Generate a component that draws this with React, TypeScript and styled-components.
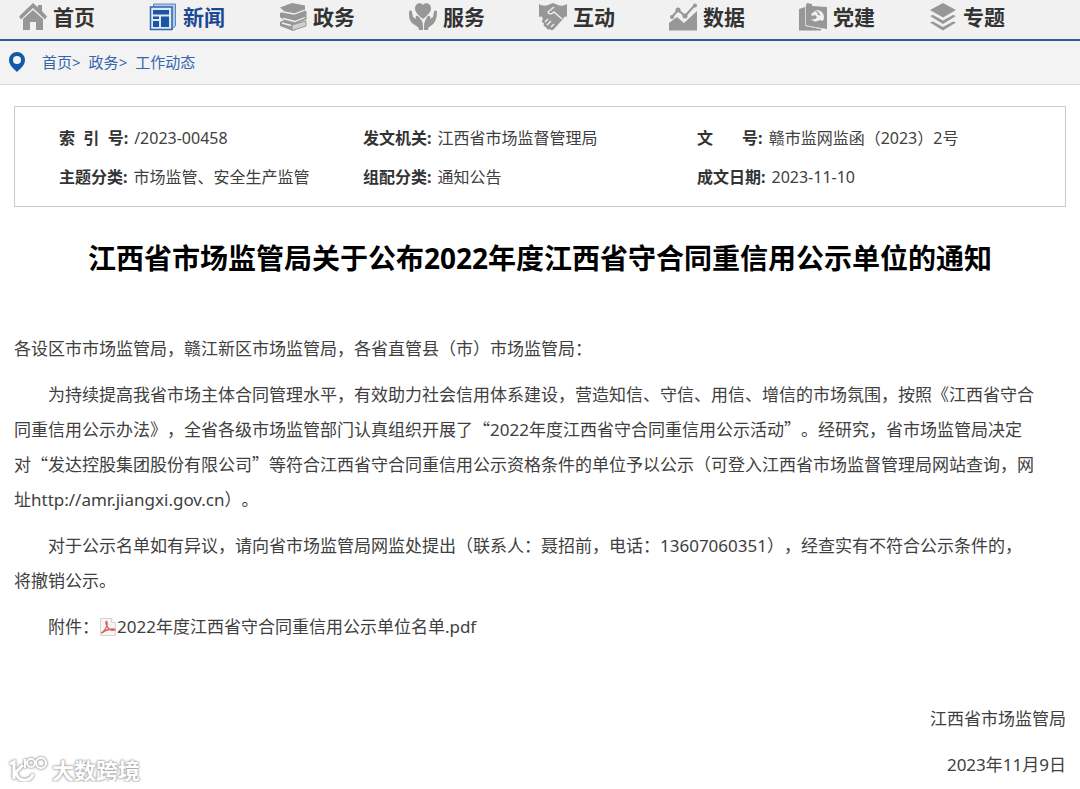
import React from 'react';
import styled, { createGlobalStyle } from 'styled-components';

const GlobalStyle = createGlobalStyle`
  * { box-sizing: border-box; }
  body {
    margin: 0;
    background: #fff;
    color: #404040;
    font-family: "Noto Sans", "Noto Sans CJK SC", sans-serif;
    text-spacing-trim: space-all;
  }
  a { color: inherit; text-decoration: none; }
`;

const Nav = styled.nav`
  display: grid;
  grid-template-columns: repeat(8, 1fr);
  height: 41px;
  padding: 0 21px 5px 19px;
  background: #f1f1f1;
  border-bottom: 2px solid #2d5c9c;
`;

const NavLink = styled.a<{ $active?: boolean }>`
  display: flex;
  align-items: center;
  gap: 6px;
  color: ${p => (p.$active ? '#1b4a94' : '#333')};
  font-size: 21px;
  line-height: 34px;
  font-weight: 700;
  white-space: nowrap;
`;

const NavIcon = styled.svg<{ $active?: boolean }>`
  flex: none;
  width: 28px;
  height: 28px;
  color: ${p => (p.$active ? '#1b56a6' : '#979797')};
`;

const Crumbs = styled.nav`
  display: flex;
  align-items: center;
  height: 44px;
  padding: 0 8px 2px;
  background: #f3f3f3;
  border-bottom: 1px solid #dcdcdc;
  color: #3465ae;
  font-size: 15px;
  line-height: 22px;
`;

const Pin = styled.svg`
  width: 18px;
  height: 22px;
  margin-right: 16px;
`;

const Crumb = styled.span`
  margin-right: 8px;
`;

const Main = styled.main`
  position: relative;
  padding: 21px 14px 0;
`;

const Info = styled.dl`
  display: grid;
  grid-template-columns: 304fr 334fr 368fr;
  row-gap: 15px;
  margin: 0;
  padding: 19px 0 17px 44px;
  border: 1px solid #ccc;
  font-size: 16px;
  line-height: 24px;
`;

const InfoItem = styled.div`
  display: flex;
  gap: 6px;
  white-space: nowrap;
`;

const Label = styled.dt`
  font-weight: 700;
  color: #333;
`;

const Value = styled.dd`
  margin: 0;
`;

const Title = styled.h1`
  margin: 31px 0 53px;
  color: #000;
  font-size: 28px;
  line-height: 40px;
  font-weight: 700;
  text-align: center;
`;

const Paragraph = styled.p<{ $indent?: boolean }>`
  max-width: 60em;
  margin: 0 0 11px;
  font-size: 17px;
  line-height: 35px;
  text-indent: ${p => (p.$indent ? '2em' : '0')};
`;

const Quoted = styled.span`
  font-family: "Noto Sans CJK SC", sans-serif;
  line-height: 1;
`;

const PdfIcon = styled.svg`
  width: 18px;
  height: 18px;
  vertical-align: -3px;
`;

const Signature = styled.footer`
  margin-top: 57px;
  font-size: 17px;
  line-height: 35px;
  text-align: right;
`;

const SignLine = styled.p`
  margin: 0 0 11px;

  &:last-child { margin: 0; }
`;

const Watermark = styled.div`
  position: absolute;
  left: 8px;
  bottom: -4px;
  display: flex;
  align-items: center;
  gap: 4px;
  color: #fff;
  font-size: 22px;
  line-height: 32px;
  font-weight: 700;
  text-shadow: 0 0 2px #999, 0 0 2px #aaa, 0 0 3px #bbb;
`;

const WatermarkLogo = styled.svg`
  width: 40px;
  height: 30px;
  filter: drop-shadow(0 0 1px #999) drop-shadow(0 0 1px #bbb);
`;

const icons: Record<string, React.ReactNode> = {
  首页: (
    <g fill="currentColor">
      <path d="M14 0 19 4.500V2h4v6l5 5.500-2 3L14 5 2 16.500l-2-3Z" />
      <path d="M4 16 14 7l10 9v11h-7v-8h-6v8H4Z" />
    </g>
  ),
  新闻: (
    <g>
      <path d="M4.500 4V1h22v22l-3.500 3" fill="#b4c9e4" stroke="#5d87c0" />
      <path d="M1.500 4h21.500v22.500H1.500Z" fill="#dfe8f3" stroke="#2f66b0" strokeWidth="1.500" />
      <path d="M4 7h16v4.500H4ZM4 13.500h6v2.500H4ZM4 18h6v6H4Zm8-4.500h8V24h-8Z" fill="currentColor" />
    </g>
  ),
  政务: (
    <g>
      <path d="M1 4.500 13 0l13 2.500v5l1.500 1v8L17 21v6l-4 .5L1 23v-4l4-2-4-3v-4l4-2Z" fill="currentColor" />
      <path d="m2 8.500 13 2.500 11-4M4 15.500l12 3 10-4M3 20l9 2.500" fill="none" stroke="#f1f1f1" strokeWidth="1.300" />
      <path d="m13 22 14-4v5l-14 4.500Z" fill="#d0d0d0" stroke="#979797" />
    </g>
  ),
  服务: (
    <g fill="currentColor">
      <path d="M14 16C9 12 6 9 6 5.500 6 0 12-1 14 2c2-3 8-2 8 3.500C22 9 19 12 14 16Z" />
      <path d="M0 9c0-2 3-2 3 0l1 5 3 2c-1-4 1-4 3-2l3 4c1 2 1 5 1 9h-4c0-4-4-4-7-7S0 13 0 9ZM28 9c0-2-3-2-3 0l-1 5-3 2c1-4-1-4-3-2l-2 4c-1 2-1 5-1 9h4c0-4 4-4 6-7s3-6 3-11Z" />
    </g>
  ),
  互动: (
    <g>
      <path d="M0 1c3 2 6 2 9 1l5-2 5 2c3 1 6 1 9-1v13c-2-1-3 0-4 2l-9 10c-2 2-4 1-4 0-2 1-4 0-4-2-2 0-3-2-2-4-2 0-3-2-1-4-1-3-2-3-4-2Z" fill="currentColor" />
      <path d="M15 4 9 9c1 3 4 2 6 0l8 7M6 19l3-3M8 22l4-4M12 24l3-3" fill="none" stroke="#f1f1f1" strokeWidth="1.300" />
    </g>
  ),
  数据: (
    <g>
      <path d="M0 27.500V20l8-6 7 6 13-12v19.500Z" fill="currentColor" />
      <path d="m3 14 6-7 7 6L26 2" fill="none" stroke="currentColor" strokeWidth="2" />
      <g fill="currentColor"><circle cx="3" cy="14" r="2" /><circle cx="9" cy="7" r="2.500" /><circle cx="16" cy="13" r="2.500" /><circle cx="26" cy="2.500" r="2" /></g>
    </g>
  ),
  党建: (
    <g>
      <path d="m0 6 6-2v19l16 3v1.500H0Z" fill="currentColor" />
      <path d="m8 0 5 1v2l15 1v22L7 22.500V2Z" fill="currentColor" />
      <path d="M6.500 3v19.500L23 26" fill="none" stroke="#d6d6d6" />
      <path d="M16 7c7-1 11 5 8 11l-3-1c-3 2-7 2-9-1 3 1 5 0 6-2l-2-2-3 1-1-2 4-3 3 2-1 1 3 2c0-3-2-5-5-6Z" fill="#f1f1f1" />
    </g>
  ),
  专题: (
    <g fill="currentColor">
      <path d="m14 0 13 7-13 7.500L1 7Z" />
      <path d="m1 13 3-1 10 5.500L24 12l3 1-13 8ZM1 19.500l3-1L14 24l10-5.500 3 1-13 8Z" />
    </g>
  ),
};

const infoRows = [
  ['索\u00a0\u00a0引\u00a0\u00a0号:', '/2023-00458'],
  ['发文机关:', '江西省市场监督管理局'],
  ['文\u00a0\u00a0\u00a0\u00a0\u00a0\u00a0\u00a0号:', '赣市监网监函（2023）2号'],
  ['主题分类:', '市场监管、安全生产监管'],
  ['组配分类:', '通知公告'],
  ['成文日期:', '2023-11-10'],
];

export default function App() {
  return (
    <>
      <GlobalStyle />
      <Nav>
        {Object.keys(icons).map(name => (
          <NavLink key={name} href="#" $active={name === '新闻'}>
            <NavIcon viewBox="0 0 28 28" $active={name === '新闻'} aria-hidden="true">{icons[name]}</NavIcon>
            {name}
          </NavLink>
        ))}
      </Nav>
      <Crumbs>
        <Pin viewBox="0 0 18 22" aria-hidden="true">
          <path d="M9 1a8 8 0 0 0-8 8c0 5 4 8 8 12 4-4 8-7 8-12a8 8 0 0 0-8-8Z" fill="#1259ac" />
          <circle cx="9" cy="9" r="4" fill="#f3f3f3" />
        </Pin>
        <Crumb><a href="#">首页</a>&gt;</Crumb>
        <Crumb><a href="#">政务</a>&gt;</Crumb>
        <Crumb><a href="#">工作动态</a></Crumb>
      </Crumbs>
      <Main>
        <Info>
          {infoRows.map(([label, value]) => (
            <InfoItem key={label}>
              <Label>{label}</Label>
              <Value>{value}</Value>
            </InfoItem>
          ))}
        </Info>
        <Title>江西省市场监管局关于公布2022年度江西省守合同重信用公示单位的通知</Title>
        <Paragraph>各设区市市场监管局，赣江新区市场监管局，各省直管县（市）市场监管局：</Paragraph>
        <Paragraph $indent>
          为持续提高我省市场主体合同管理水平，有效助力社会信用体系建设，营造知信、守信、用信、增信的市场氛围，按照《江西省守合同重信用公示办法》，全省各级市场监管部门认真组织开展了<Quoted>“</Quoted>2022年度江西省守合同重信用公示活动<Quoted>”</Quoted>。经研究，省市场监管局决定对<Quoted>“</Quoted>发达控股集团股份有限公司<Quoted>”</Quoted>等符合江西省守合同重信用公示资格条件的单位予以公示（可登入江西省市场监督管理局网站查询，网址http://amr.jiangxi.gov.cn）。
        </Paragraph>
        <Paragraph $indent>
          对于公示名单如有异议，请向省市场监管局网监处提出（联系人：聂招前，电话：13607060351），经查实有不符合公示条件的，将撤销公示。
        </Paragraph>
        <Paragraph $indent>
          附件：
          <a href="#">
            <PdfIcon viewBox="0 0 18 18" aria-hidden="true">
              <path d="M1.500.500h11l4 4v13h-15Z" fill="#f6f6f6" stroke="#d4d4d4" />
              <path d="M12.500.500v4h4" fill="#fff" stroke="#d4d4d4" />
              <path d="M2 15c4-2 7-7 6-11-1-2-2 1 0 4 2 4 5 5 8 4 1-2-9-1-13 3" fill="none" stroke="#e0605b" strokeWidth="1.300" />
            </PdfIcon>
            2022年度江西省守合同重信用公示单位名单.pdf
          </a>
        </Paragraph>
        <Signature>
          <SignLine>江西省市场监管局</SignLine>
          <SignLine>2023年11月9日</SignLine>
        </Signature>
        <Watermark>
          <WatermarkLogo viewBox="0 0 40 30" fill="none" stroke="#fff" strokeWidth="3" aria-hidden="true">
            <path d="M2 9 6 7v17M15 10 8 17c1 10 14 11 17 2" />
            <path d="M17 4v9" strokeWidth="2" />
            <circle cx="23" cy="8" r="4" strokeWidth="2" />
            <circle cx="33" cy="8" r="5" strokeWidth="2" />
          </WatermarkLogo>
          大数跨境
        </Watermark>
      </Main>
    </>
  );
}
